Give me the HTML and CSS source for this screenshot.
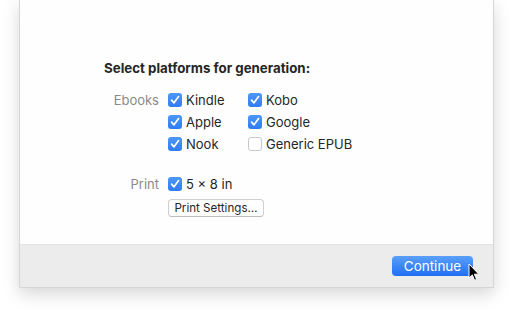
FILE: index.html
```html
<!DOCTYPE html>
<html>
<head>
<meta charset="utf-8">
<link rel="stylesheet" href="styles.css">
</head>
<body>
<div class="window">
  <div class="content">
    <div class="title">Select platforms for generation:</div>
    <div class="section">
      <div class="label">Ebooks</div>
      <div class="options">
        <div class="opt"><span class="cb on"><svg viewBox="0 0 14 14"><path d="M3.6 7.2 L6 9.8 L10.6 3.6"/></svg></span>Kindle</div>
        <div class="opt"><span class="cb on"><svg viewBox="0 0 14 14"><path d="M3.6 7.2 L6 9.8 L10.6 3.6"/></svg></span>Kobo</div>
        <div class="opt"><span class="cb on"><svg viewBox="0 0 14 14"><path d="M3.6 7.2 L6 9.8 L10.6 3.6"/></svg></span>Apple</div>
        <div class="opt"><span class="cb on"><svg viewBox="0 0 14 14"><path d="M3.6 7.2 L6 9.8 L10.6 3.6"/></svg></span>Google</div>
        <div class="opt"><span class="cb on"><svg viewBox="0 0 14 14"><path d="M3.6 7.2 L6 9.8 L10.6 3.6"/></svg></span>Nook</div>
        <div class="opt"><span class="cb"></span>Generic EPUB</div>
      </div>
    </div>
    <div class="section print">
      <div class="label">Print</div>
      <div class="print-col">
        <div class="opt"><span class="cb on"><svg viewBox="0 0 14 14"><path d="M3.6 7.2 L6 9.8 L10.6 3.6"/></svg></span>5 × 8 in</div>
        <button class="btn">Print Settings…</button>
      </div>
    </div>
  </div>
  <div class="footer">
    <button class="primary">Continue</button>
    <svg class="cursor" viewBox="0 0 12 19" width="12" height="19"><path d="M1 1 L1 15 L4.3 11.9 L6.6 17.3 L8.6 16.4 L6.4 11.2 L10.8 11.2 Z" fill="#000" stroke="#fff" stroke-width="1" stroke-linejoin="round"/></svg>
  </div>
</div>
</body>
</html>
```
FILE: styles.css
```css
html, body {
  margin: 0;
  padding: 0;
  background: #ffffff;
}
body {
  font-family: Inter, "Liberation Sans", Arial, sans-serif;
  font-size: 13px;
  color: #262626;
  width: 513px;
  height: 311px;
  overflow: hidden;
}
.window {
  margin-left: 19px;
  width: 475px;
  height: 288px;
  background: #fefefe;
  border: 1px solid #d6d6d6;
  border-top: none;
  box-sizing: border-box;
  box-shadow: 0 6px 16px rgba(0,0,0,0.16);
  display: flex;
  flex-direction: column;
  position: relative;
}
.content {
  height: 245px;
  box-sizing: border-box;
  padding: 60px 0 0 84px;
  border-bottom: 1px solid #e3e3e3;
}
.title {
  font-weight: 700;
  font-size: 13.3px;
  line-height: 16px;
  margin-bottom: 13px;
}
.section {
  display: flex;
}
.section.print {
  margin-top: 18px;
}
.label {
  width: 55px;
  text-align: right;
  color: #8a8a8a;
  line-height: 22px;
  margin-right: 9px;
}
.options {
  display: grid;
  grid-template-columns: 80px auto;
  grid-auto-rows: 22px;
}
.opt {
  display: flex;
  align-items: center;
  height: 22px;
  line-height: 22px;
  white-space: nowrap;
}
.cb {
  width: 14px;
  height: 14px;
  box-sizing: border-box;
  border-radius: 3px;
  border: 1px solid #c8c8c8;
  background: #ffffff;
  margin-right: 4px;
  display: flex;
}
.cb.on {
  border: none;
  background: linear-gradient(#4e97f8, #2f7bf5);
}
.cb svg {
  width: 14px;
  height: 14px;
}
.cb path {
  fill: none;
  stroke: #fff;
  stroke-width: 1.7;
  stroke-linecap: round;
  stroke-linejoin: round;
}
.print-col {
  display: flex;
  flex-direction: column;
  align-items: flex-start;
}
.btn {
  margin-top: 4px;
  width: 96px;
  height: 18px;
  padding: 0;
  font-family: inherit;
  font-size: 11.6px;
  color: #262626;
  background: #ffffff;
  border: 1px solid #cfcfcf;
  border-bottom-color: #bdbdbd;
  border-radius: 4px;
  line-height: 16px;
}
.footer {
  flex: 1;
  background: #ececec;
  display: flex;
  justify-content: flex-end;
  align-items: flex-start;
  padding: 11px 20px 0 0;
  position: relative;
}
.primary {
  width: 81px;
  height: 20px;
  border: none;
  border-radius: 4px;
  background: linear-gradient(#5aa0fa, #1f6ff3);
  color: #fff;
  font-family: inherit;
  font-size: 13.5px;
  line-height: 20px;
  padding: 0;
}
.cursor {
  position: absolute;
  left: 448px;
  top: 18px;
}
```
